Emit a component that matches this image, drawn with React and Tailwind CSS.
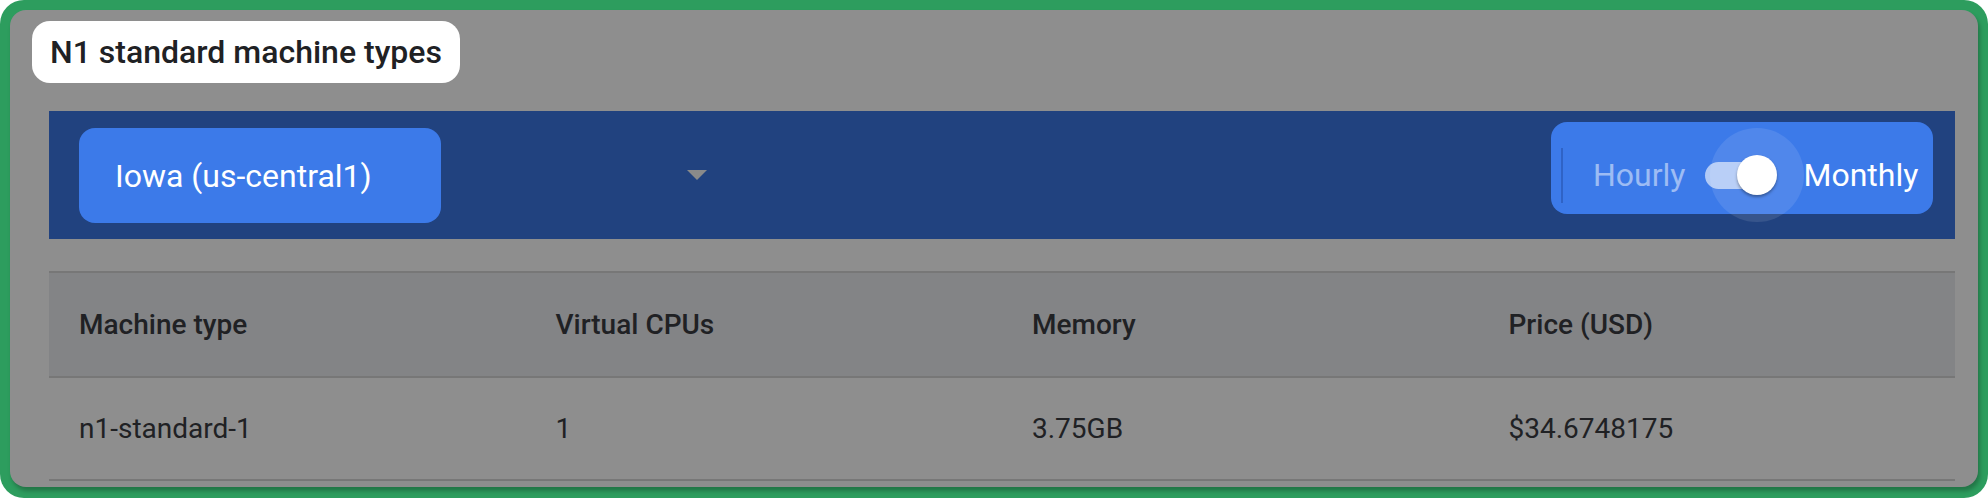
import React from 'react';

const columns = ['Machine type', 'Virtual CPUs', 'Memory', 'Price (USD)'];
const rows = [['n1-standard-1', '1', '3.75GB', '$34.6748175']];

export default function App() {
  return (
    <div className="w-[1988px] h-[498px] bg-white font-['Roboto','Liberation_Sans',sans-serif]">
      <div className="h-full rounded-[24px] bg-[#2d9d5e] pt-[10px] pl-[10px] pr-[10px] pb-[11px]">
        <div className="h-full rounded-[16px] bg-[#8e8e8e] shadow-[2px_4px_4px_rgba(0,0,0,0.25)] pt-[11px] pl-[22px] pr-[23px] pb-[6px] flex flex-col">
          {/* Title */}
          <div className="self-start h-[62px] px-[18px] rounded-[18px] bg-white flex items-center text-[32px] font-medium text-[#202124]">
            N1 standard machine types
          </div>

          <div className="ml-[17px]">
            {/* Region / billing bar */}
            <div className="mt-[28px] h-[128px] bg-[#21427f] flex items-start pl-[30px] pr-[22px]">
              <div className="mt-[17px] h-[95px] w-[362px] rounded-[16px] bg-[#3c7ae9] pl-[36px] flex items-center text-white text-[32px]">
                Iowa (us-central1)
              </div>
              <svg className="mt-[59px] ml-[246px]" width="20" height="10" viewBox="0 0 20 10">
                <path d="M0 0h20L10 10z" fill="#8a8a8a" />
              </svg>
              <div className="ml-auto mt-[11px] h-[92px] w-[382px] rounded-[16px] bg-[#3c7ae9] flex items-center pt-[14px] pl-[10px]">
                <div className="w-[2px] h-[55px] bg-[#2f63c6]" />
                <span className="ml-[30px] text-[32px] text-white/50">Hourly</span>
                <div className="relative ml-[20px] w-[72px] h-[40px] flex items-center">
                  <div className="w-[68px] h-[27px] rounded-full bg-white/60" />
                  <div className="absolute left-[5px] top-[-27px] w-[94px] h-[94px] rounded-full bg-white/10" />
                  <div className="absolute left-[32px] top-0 w-[40px] h-[40px] rounded-full bg-white shadow-[0_2px_3px_rgba(0,0,0,0.35)]" />
                </div>
                <span className="ml-[26px] text-[32px] text-white">Monthly</span>
              </div>
            </div>

            {/* Table */}
            <div className="mt-[32px] border-t-2 border-[#777777]">
              <div className="grid grid-cols-4 h-[105px] items-center bg-[#838486] border-b-2 border-[#777777]">
                {columns.map((c) => (
                  <div key={c} className="pl-[30px] text-[28px] font-medium text-[#202124]">{c}</div>
                ))}
              </div>
              {rows.map((r) => (
                <div key={r[0]} className="grid grid-cols-4 h-[103px] items-center border-b-2 border-[#777777]">
                  {r.map((v, i) => (
                    <div key={i} className="pl-[30px] text-[28px] text-[#202124]">{v}</div>
                  ))}
                </div>
              ))}
            </div>
          </div>
        </div>
      </div>
    </div>
  );
}
